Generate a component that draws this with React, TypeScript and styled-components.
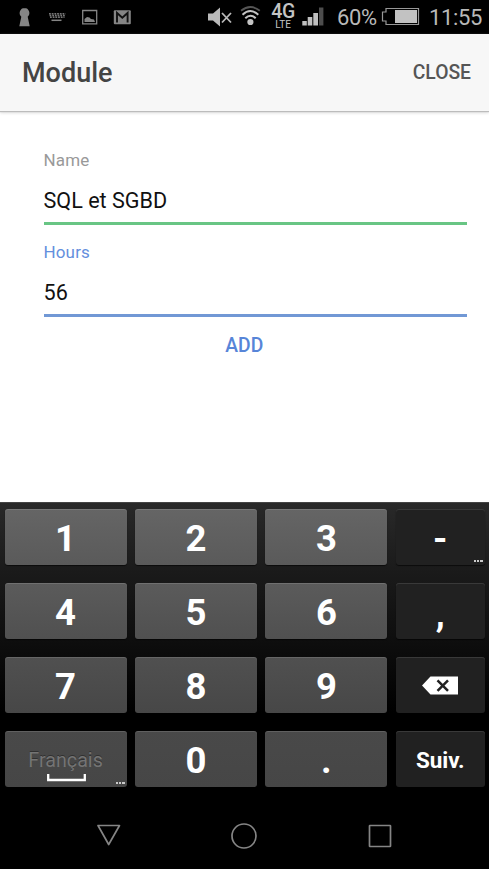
import React from "react";
import styled, { createGlobalStyle } from "styled-components";

const GlobalStyle = createGlobalStyle`
  * { box-sizing: border-box; }
  body { margin: 0; background: #fff; font-family: Roboto, sans-serif; }
`;

const Screen = styled.div`
  width: 489px;
  height: 869px;
  display: flex;
  flex-direction: column;
  overflow: hidden;
  background: #fff;
`;

const StatusBar = styled.div`
  height: 34px;
  flex: none;
  display: flex;
  justify-content: space-between;
  padding-right: 4px;
  background: #000;
  color: #b9b9b9;
`;

const StatusIcons = styled.svg`
  display: block;
  height: 34px;
  flex: none;
`;

const StatusGroup = styled.div`
  display: flex;
  height: 34px;
`;

const Network = styled.div`
  width: 24px;
  margin-left: 7px;
  margin-right: 2px;
  padding-top: 1px;
  display: flex;
  flex-direction: column;
  align-items: center;
  color: #c4c4c4;
`;

const NetworkType = styled.span`
  font-size: 19.5px;
  line-height: 22px;
  font-weight: 500;
  letter-spacing: -0.5px;
`;

const NetworkSub = styled.span`
  font-size: 10px;
  line-height: 3px;
`;

const StatusText = styled.span<{ $width: number }>`
  width: ${(p) => p.$width}px;
  font-size: 22px;
  line-height: 36px;
  letter-spacing: -0.4px;
  white-space: nowrap;
`;

const Header = styled.header`
  height: 77px;
  flex: none;
  display: flex;
  align-items: center;
  justify-content: space-between;
  padding: 0 18px 0 22px;
  background: #f7f7f7;
  color: #444;
  box-shadow: 0 1px 1px #bcbcbc, 0 2px 3px #ddd;
`;

const Title = styled.h1`
  margin: 0;
  font-size: 27px;
  font-weight: 500;
  line-height: 32px;
`;

const HeaderButton = styled.button`
  padding: 0;
  border: 0;
  background: none;
  color: #555;
  font: 500 19.3px/24px Roboto, sans-serif;
`;

const Form = styled.main`
  height: 391px;
  flex: none;
  display: flex;
  flex-direction: column;
  padding: 37px 22px 0 43.5px;
`;

const Field = styled.label<{ $accent: string }>`
  display: flex;
  flex-direction: column;
  height: 77px;
  margin-bottom: 15px;
  border-bottom: 3px solid ${(p) => p.$accent};
`;

const FieldLabel = styled.span<{ $color: string }>`
  color: ${(p) => p.$color};
  font-size: 17px;
  line-height: 24px;
  letter-spacing: 0.15px;
`;

const FieldInput = styled.input`
  width: 100%;
  height: 32px;
  margin-top: 12.5px;
  padding: 0;
  border: 0;
  outline: 0;
  background: transparent;
  color: #111;
  font: 400 21.6px/32px Roboto, sans-serif;
`;

const AddButton = styled.button`
  align-self: center;
  margin: 2px 22px 0 0;
  padding: 0;
  border: 0;
  background: none;
  color: #5785d8;
  font: 500 19.3px/24px Roboto, sans-serif;
`;

const Keyboard = styled.div`
  height: 293px;
  flex: none;
  display: grid;
  grid-template-columns: 122px 122px 122px 89px;
  grid-auto-rows: 56px;
  column-gap: 8.4px;
  row-gap: 18.1px;
  padding: 6px 0 0 4.6px;
  border-top: 1px solid #444;
  background: linear-gradient(#292929 0, #1a1a1a 70px, #0d0d0d 142px, #000 210px);
`;

const shades = ["#656565, #5a5a5a", "#5b5b5b, #505050", "#505050, #474747", "#494949, #464646"];

const Key = styled.button<{ $row: number; $dark?: boolean; $small?: boolean }>`
  position: relative;
  display: flex;
  flex-direction: column;
  align-items: center;
  justify-content: center;
  padding: ${(p) => (p.$small ? 1 : 3)}px 0 0 0;
  border: 0;
  border-radius: 3px;
  color: #fff;
  background: ${(p) => (p.$dark ? "#212121" : `linear-gradient(${shades[p.$row]})`)};
  box-shadow: inset 0 1px 0 ${(p) => (p.$dark ? "#393939" : "rgba(255,255,255,.13)")}, 0 1px 1px rgba(0,0,0,.6);
  font: 700 ${(p) => (p.$small ? "22.5px/28px Roboto" : "36.5px/42px Roboto")}, sans-serif;
`;

const More = styled.span`
  position: absolute;
  right: 2px;
  bottom: 3px;
  display: flex;
  gap: 1px;
  &::before, &::after, i { content: ""; width: 2.3px; height: 2px; background: #c9c9c9; }
`;

const Comma = styled.span`
  padding-top: 2px;
`;

const SpaceLabel = styled.span`
  margin-top: 9px;
  color: #747474;
  font: 400 19.7px/24px Roboto, sans-serif;
  text-shadow: 0 -1px 0 #303030;
`;

const Glyph = styled.svg`
  display: block;
  flex: none;
`;

const BackspaceGlyph = styled(Glyph)`
  margin-top: -3px;
`;

const SpaceGlyph = styled(Glyph)`
  margin: 1px 0 0 1px;
`;

const NavBar = styled.nav`
  flex: 1;
  display: flex;
  justify-content: space-between;
  padding: 27px 96px 0 95.5px;
  background: #000;
`;

const LeftStatus = () => (
  <StatusIcons width="140" viewBox="0 0 140 34" fill="#858585">
    <path d="M24.500 8a5 5 0 0 0-3.200 8.700l-2 9.500h10.400l-2-9.500a5 5 0 0 0-3.200-8.700Z" />
    <path d="M49 13.700h16.500M49.500 15.500h15.500M50 17.300h14.500" stroke="#777" strokeWidth="1.400" strokeDasharray="1.800 .9" />
    <path d="M51.500 20.300h10" stroke="#858585" strokeWidth="1.500" />
    <path d="M82.700 10.500h14v13.300h-14z" fill="none" stroke="#858585" strokeWidth="1.300" />
    <path d="M84.500 22v-3l2.500-2 2.500.5 1.500 1.500 3 .5 1 2.500Z" />
    <rect x="113.800" y="10.200" width="17" height="14" rx="1" />
    <path d="M117 22.500v-9.500l5.300 4.800 5.300-4.800v9.500" fill="none" stroke="#111" strokeWidth="1.900" />
  </StatusIcons>
);

const SoundAndWifi = () => (
  <StatusIcons width="64" viewBox="200 0 64 34" fill="none">
    <path d="M208 13.500h5l7-6v19l-7-6h-5Z" fill="#bababa" />
    <path d="m222 13 9 9.500m0-9.500-9 9.500" stroke="#bababa" strokeWidth="1.800" />
    <path d="M241 10.800q9.300-7.500 18.800 0" stroke="#555" strokeWidth="1.800" />
    <path d="M242.500 14.800q7.800-7.500 15.800 0M245.300 18.200q5.200-5 10.400 0" stroke="#c4c4c4" strokeWidth="2" />
    <circle cx="250.400" cy="22" r="3.100" fill="#c4c4c4" />
  </StatusIcons>
);

const Signal = () => (
  <StatusIcons width="36" viewBox="297 0 36 34" fill="#c0c0c0">
    <path d="M302.300 21h4.500v4.500h-4.500zM307.700 17h4.600v8.500h-4.600zM313.300 13h4.700v12.500h-4.700z" />
    <path d="M319 7.500h4.400v18H319z" fill="#4d4d4d" />
  </StatusIcons>
);

const Battery = () => (
  <StatusIcons width="47" viewBox="378 0 47 34" fill="none">
    <path d="M386 8.500h32.500v16H386v-3.500h-3.500v-9h3.500Z" stroke="#989898" strokeWidth="1.200" />
    <path d="M395 10h22v13h-22z" fill="#c2c2c2" />
  </StatusIcons>
);

const Space = () => (
  <SpaceGlyph width="39" height="8" viewBox="0 0 39 8">
    <path d="M1.200 0v6h36.600V0" fill="none" stroke="#fff" strokeWidth="2.300" />
  </SpaceGlyph>
);

const Backspace = () => (
  <BackspaceGlyph width="36" height="19" viewBox="0 0 36 19">
    <path d="M0 9.500 8.500.500H36v18H8.500Z" fill="#fff" />
    <path d="m15.500 4.300 10.500 10.500m0-10.500-10.500 10.500" stroke="#222" strokeWidth="2.500" />
  </BackspaceGlyph>
);

export default function App() {
  return (
    <>
      <GlobalStyle />
      <Screen>
        <StatusBar>
          <LeftStatus />
          <StatusGroup>
            <SoundAndWifi />
            <Network>
              <NetworkType>4G</NetworkType>
              <NetworkSub>LTE</NetworkSub>
            </Network>
            <Signal />
            <StatusText $width={45}>&thinsp;60%</StatusText>
            <Battery />
            <StatusText $width={60}>&thinsp;11:55</StatusText>
          </StatusGroup>
        </StatusBar>
        <Header>
          <Title>Module</Title>
          <HeaderButton>CLOSE</HeaderButton>
        </Header>
        <Form>
          <Field $accent="#68c584">
            <FieldLabel $color="#999">Name</FieldLabel>
            <FieldInput defaultValue="SQL et SGBD" />
          </Field>
          <Field $accent="#7198d5">
            <FieldLabel $color="#648fdd">Hours</FieldLabel>
            <FieldInput defaultValue="56" />
          </Field>
          <AddButton>ADD</AddButton>
        </Form>
        <Keyboard>
          <Key $row={0}>1</Key>
          <Key $row={0}>2</Key>
          <Key $row={0}>3</Key>
          <Key $row={0} $dark>-<More><i /></More></Key>
          <Key $row={1}>4</Key>
          <Key $row={1}>5</Key>
          <Key $row={1}>6</Key>
          <Key $row={1} $dark><Comma>,</Comma></Key>
          <Key $row={2}>7</Key>
          <Key $row={2}>8</Key>
          <Key $row={2}>9</Key>
          <Key $row={2} $dark aria-label="Backspace"><Backspace /></Key>
          <Key $row={3}><SpaceLabel>Français</SpaceLabel><Space /><More><i /></More></Key>
          <Key $row={3}>0</Key>
          <Key $row={3}>.</Key>
          <Key $row={3} $dark $small>Suiv.</Key>
        </Keyboard>
        <NavBar>
          <Glyph width="26" height="28" viewBox="0 0 26 28" fill="none" stroke="#858585" strokeWidth="1.700">
            <path d="M2 3.500h21.500L12.700 22.500Z" strokeLinejoin="round" />
          </Glyph>
          <Glyph width="28" height="28" viewBox="0 0 28 28" fill="none" stroke="#858585" strokeWidth="1.700">
            <circle cx="14" cy="14" r="12" />
          </Glyph>
          <Glyph width="26" height="28" viewBox="0 0 26 28" fill="none" stroke="#858585" strokeWidth="1.700">
            <rect x="2.500" y="3.500" width="21" height="21" rx=".5" />
          </Glyph>
        </NavBar>
      </Screen>
    </>
  );
}
